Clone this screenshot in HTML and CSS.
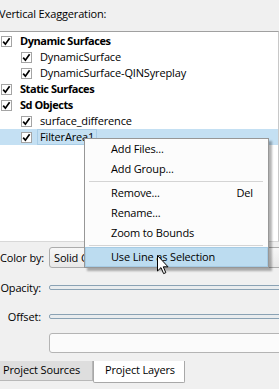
FILE: index.html
```html
<!DOCTYPE html>
<html lang="en">
  <head>
    <meta charset="UTF-8" />
    <meta name="viewport" content="width=device-width, initial-scale=1.0" />
    <title>Project Layers</title>
    <link rel="stylesheet" href="styles.css">
  </head>
  <body>
    <div class="panel">
      <div class="top-label">Vertical Exaggeration:</div>

      <div class="tree">
        <div class="row">
          <span class="check"><svg width="11" height="11" viewBox="0 0 11 11"><path d="M2.2 5.6 L4.4 8.2 L8.6 2.2" /></svg></span>
          <span class="name group">Dynamic Surfaces</span>
        </div>
        <div class="row child">
          <span class="check"><svg width="11" height="11" viewBox="0 0 11 11"><path d="M2.2 5.6 L4.4 8.2 L8.6 2.2" /></svg></span>
          <span class="name">DynamicSurface</span>
        </div>
        <div class="row child">
          <span class="check"><svg width="11" height="11" viewBox="0 0 11 11"><path d="M2.2 5.6 L4.4 8.2 L8.6 2.2" /></svg></span>
          <span class="name">DynamicSurface-QINSyreplay</span>
        </div>
        <div class="row">
          <span class="check"><svg width="11" height="11" viewBox="0 0 11 11"><path d="M2.2 5.6 L4.4 8.2 L8.6 2.2" /></svg></span>
          <span class="name group">Static Surfaces</span>
        </div>
        <div class="row">
          <span class="check"><svg width="11" height="11" viewBox="0 0 11 11"><path d="M2.2 5.6 L4.4 8.2 L8.6 2.2" /></svg></span>
          <span class="name group">Sd Objects</span>
        </div>
        <div class="row child">
          <span class="check"><svg width="11" height="11" viewBox="0 0 11 11"><path d="M2.2 5.6 L4.4 8.2 L8.6 2.2" /></svg></span>
          <span class="name">surface_difference</span>
        </div>
        <div class="row child selected">
          <span class="check"><svg width="11" height="11" viewBox="0 0 11 11"><path d="M2.2 5.6 L4.4 8.2 L8.6 2.2" /></svg></span>
          <span class="name focus">FilterArea1</span>
        </div>
      </div>

      <div class="props">
        <div class="prop color-row">
          <span class="prop-label">Color by:</span>
          <div class="combo">Solid Color</div>
        </div>
        <div class="prop slider-row">
          <span class="prop-label">Opacity:</span>
          <div class="track"></div>
        </div>
        <div class="prop slider-row">
          <span class="prop-label">Offset:</span>
          <div class="track"></div>
        </div>
        <div class="prop box-row">
          <span class="prop-label"></span>
          <div class="textbox"></div>
        </div>
      </div>

      <div class="tabs">
        <div class="tab">Project Sources</div>
        <div class="tab active">Project Layers</div>
      </div>
    </div>

    <ul class="menu">
      <li class="item">Add Files...</li>
      <li class="item">Add Group...</li>
      <li class="sep"></li>
      <li class="item">Remove... <span class="key">Del</span></li>
      <li class="item">Rename...</li>
      <li class="item">Zoom to Bounds</li>
      <li class="sep"></li>
      <li class="item hover">Use Line as Selection</li>
    </ul>

    <svg class="cursor" width="12" height="20" viewBox="0 0 12 20">
      <path d="M0.5 0.5 L0.5 16 L4 12.6 L6.6 18.6 L8.8 17.7 L6.3 11.8 L11 11.8 Z" fill="#fff" stroke="#000" stroke-width="1" stroke-linejoin="miter" />
    </svg>
  </body>
</html>
```

FILE: styles.css
```css
body {
  margin: 0;
  padding: 0;
  width: 279px;
  height: 389px;
  overflow: hidden;
  background-color: #f0f0f0;
  font-family: "Open Sans", sans-serif;
  font-size: 11px;
  letter-spacing: -0.15px;
  color: #000;
  position: relative;
}
.panel {
  display: flex;
  flex-direction: column;
}
.top-label {
  height: 31px;
  line-height: 28px;
  margin-left: -1px;
  white-space: nowrap;
}
.tree {
  height: 208px;
  background-color: #fff;
  border-top: 1px solid #a0a0a0;
  border-bottom: 1px solid #d8d8d8;
  border-right: 1px solid #c8c8c8;
  padding-top: 1px;
  box-sizing: content-box;
}
.row {
  height: 16px;
  display: flex;
  align-items: center;
  padding-left: 1px;
  white-space: nowrap;
}
.row.child {
  padding-left: 21px;
}
.row.selected {
  background-color: #c4e0f3;
}
.check {
  width: 11px;
  height: 11px;
  box-sizing: border-box;
  border: 1px solid #a4a4a4;
  background-color: #fff;
  display: flex;
}
.check svg {
  margin: -1px;
}
.check path {
  fill: none;
  stroke: #000;
  stroke-width: 1.7;
}
.name {
  margin-left: 8px;
  line-height: 14px;
}
.name.group {
  font-weight: bold;
  letter-spacing: -0.45px;
}
.name.focus {
  margin-left: 5px;
  padding: 0 2px;
  border: 1px solid #a9cde6;
}
.props {
  display: flex;
  flex-direction: column;
}
.prop {
  display: flex;
  align-items: center;
  gap: 8px;
  white-space: nowrap;
}
.prop-label {
  width: 41px;
  flex: none;
  text-align: right;
}
.color-row {
  margin-top: 5px;
  height: 21px;
}
.slider-row {
  margin-top: 9px;
  height: 20px;
}
.box-row {
  margin-top: 7px;
  height: 20px;
}
.combo {
  flex: 1;
  height: 21px;
  box-sizing: border-box;
  border: 1px solid #acacac;
  border-radius: 3px;
  background: linear-gradient(#f7f7f7, #e8e8e8);
  padding-left: 4px;
  line-height: 19px;
  margin-right: -20px;
}
.track {
  flex: 1;
  height: 5px;
  box-sizing: border-box;
  border: 1px solid #8aa2b4;
  border-radius: 2px;
  background-color: #e9ecee;
  margin-right: -20px;
}
.textbox {
  flex: 1;
  height: 20px;
  box-sizing: border-box;
  border: 1px solid #b4b4b4;
  border-radius: 3px;
  background-color: #fbfbfb;
  margin-right: -20px;
}
.tabs {
  display: flex;
  align-items: flex-start;
  margin-top: 8px;
}
.tab {
  height: 20px;
  box-sizing: border-box;
  width: 93px;
  padding-left: 3px;
  line-height: 18px;
  background-color: #dedede;
  border: 1px solid #b8b8b8;
  border-top: none;
  border-left: none;
  white-space: nowrap;
}
.tab.active {
  height: 22px;
  width: 92px;
  padding-left: 11px;
  background-color: #fff;
  border: 1px solid #a8a8a8;
  border-top: none;
  border-radius: 0 0 2px 2px;
}
.menu {
  position: absolute;
  left: 84px;
  top: 138px;
  width: 185px;
  box-sizing: border-box;
  margin: 0;
  padding: 0;
  list-style-type: none;
  background-color: #fcfcfc;
  border: 1px solid #979797;
  box-shadow: 3px 3px 2px rgba(0, 0, 0, 0.3);
}
.item {
  height: 20px;
  line-height: 20px;
  padding-left: 26px;
  padding-right: 15px;
  display: flex;
  justify-content: space-between;
  white-space: nowrap;
}
.item.hover {
  background-color: #bcdcf0;
  outline: 1px solid #a6cbe4;
  outline-offset: -1px;
}
.sep {
  height: 4px;
  display: flex;
  align-items: center;
  padding: 0 5px 0 4px;
}
.sep::after {
  content: "";
  flex: 1;
  height: 1px;
  background-color: #d4d4d4;
}
.cursor {
  position: absolute;
  left: 157px;
  top: 255px;
}
```
